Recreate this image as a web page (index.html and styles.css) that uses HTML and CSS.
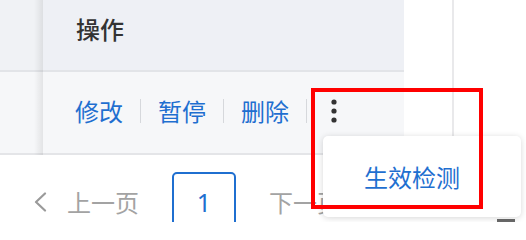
FILE: index.html
```html
<!DOCTYPE html>
<html lang="zh-CN">
<head>
<meta charset="utf-8">
<title>操作</title>
<link rel="stylesheet" href="styles.css">
</head>
<body>
<div class="page">
  <div class="top">
    <div class="table">
      <div class="stub">
        <div class="th"></div>
        <div class="td"></div>
      </div>
      <div class="fixed">
        <div class="th"><span class="th-text">操作</span></div>
        <div class="td">
          <div class="actions">
            <a class="link">修改</a>
            <span class="sep"></span>
            <a class="link">暂停</a>
            <span class="sep"></span>
            <a class="link">删除</a>
            <span class="sep"></span>
            <span class="more">
              <svg width="20" height="26" viewBox="0 0 20 26" aria-hidden="true">
                <circle cx="10" cy="4" r="2.6" fill="#333"/>
                <circle cx="10" cy="13" r="2.6" fill="#333"/>
                <circle cx="10" cy="22" r="2.6" fill="#333"/>
              </svg>
            </span>
          </div>
        </div>
      </div>
    </div>
    <div class="gap"></div>
    <div class="vline"></div>
  </div>
  <div class="pager">
    <span class="prev-icon">
      <svg width="14" height="20" viewBox="0 0 14 20" aria-hidden="true">
        <path d="M12 1.5 L3 10 L12 18.5" fill="none" stroke="#9a9a9a" stroke-width="2.2" stroke-linecap="round" stroke-linejoin="round"/>
      </svg>
    </span>
    <span class="pager-text prev">上一页</span>
    <span class="page-box">1</span>
    <span class="pager-text next">下一页</span>
  </div>
  <div class="scroll-thumb"></div>
  <div class="dropdown"><span class="dropdown-item">生效检测</span></div>
  <div class="highlight"></div>
</div>
</body>
</html>
```

FILE: styles.css
```css
html, body {
  margin: 0;
  padding: 0;
  background: #ffffff;
}
body {
  font-family: "Noto Sans CJK SC", "Noto Sans", sans-serif;
  font-size: 24px;
  line-height: 24px;
}
.page {
  position: relative;
  width: 526px;
  height: 222px;
  overflow: hidden;
}
.top {
  display: flex;
  height: 155px;
}
.table {
  display: flex;
  width: 404px;
}
.stub {
  width: 43px;
}
.stub .th {
  background: #f0f2f5;
}
.stub .td {
  background: #f6f7f9;
}
.fixed {
  position: relative;
  width: 361px;
}
.fixed::before {
  content: "";
  position: absolute;
  left: -9px;
  top: 0;
  bottom: 0;
  width: 9px;
  background: linear-gradient(to right, rgba(0,0,0,0), rgba(0,0,0,0.08));
}
.th {
  height: 70px;
  border-bottom: 2px solid #e2e4e8;
  background: #eef0f5;
  box-sizing: content-box;
}
.td {
  height: 81px;
  border-bottom: 2px solid #e4e5e8;
  background: #f6f7f9;
  box-sizing: content-box;
}
.fixed .th {
  padding-left: 33px;
  height: 53px;
  padding-top: 17px;
}
.th-text {
  display: block;
  color: #333333;
  font-weight: 500;
}
.fixed .td {
  height: 54px;
  padding-top: 27px;
  padding-left: 32px;
}
.actions {
  display: flex;
  align-items: center;
  gap: 17px;
  height: 24px;
}
.link {
  color: #1f6fd0;
  cursor: pointer;
}
.sep {
  width: 1px;
  height: 24px;
  background: #d6d8dc;
}
.more {
  display: flex;
  align-items: center;
  height: 26px;
}
.more svg {
  display: block;
}
.gap {
  width: 48px;
}
.vline {
  width: 2px;
  background: #e9e9eb;
}
.pager {
  display: flex;
  align-items: center;
  height: 60px;
  margin-top: 17px;
  padding-left: 33px;
}
.prev-icon {
  display: flex;
  width: 14px;
  height: 20px;
}
.prev-icon svg {
  display: block;
}
.pager-text {
  color: #a3a3a3;
}
.prev {
  margin-left: 20px;
}
.page-box {
  margin-left: 33px;
  width: 64px;
  height: 60px;
  box-sizing: border-box;
  border: 2px solid #1f6fd0;
  border-radius: 5px;
  display: flex;
  align-items: center;
  justify-content: center;
  color: #1f6fd0;
  font-family: "Noto Sans", sans-serif;
  font-size: 25px;
}
.next {
  margin-left: 33px;
}
.scroll-thumb {
  position: absolute;
  left: 497px;
  top: 219px;
  width: 18px;
  height: 3px;
  background: #6a6a6a;
}
.dropdown {
  position: absolute;
  left: 323px;
  top: 136px;
  width: 198px;
  height: 81px;
  box-sizing: border-box;
  padding-left: 41px;
  background: #ffffff;
  border-radius: 5px;
  box-shadow: 0 1px 6px rgba(0,0,0,0.16);
  display: flex;
  align-items: center;
}
.dropdown-item {
  color: #1f6fd0;
}
.highlight {
  position: absolute;
  left: 311px;
  top: 88px;
  width: 172px;
  height: 121px;
  box-sizing: border-box;
  border: 4px solid #ff0000;
}
```
